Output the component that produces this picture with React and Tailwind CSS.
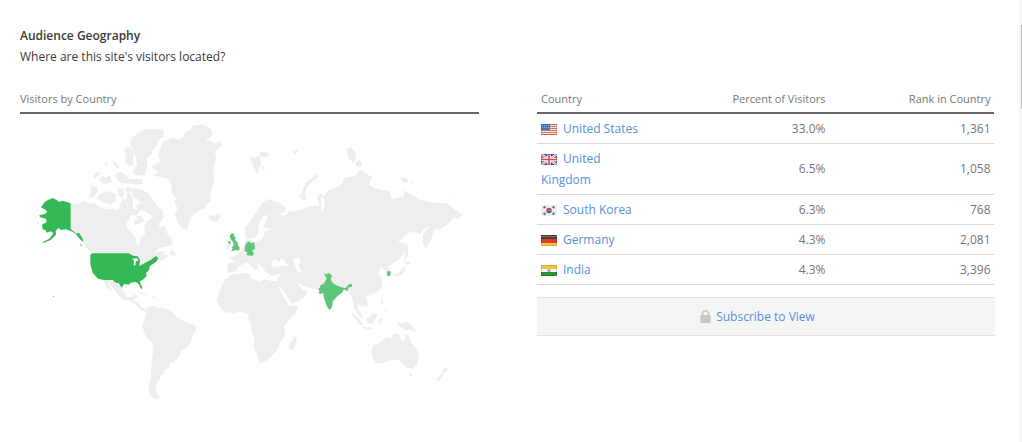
const ROWS = [
  { code: 'us', name: 'United States', percent: '33.0%', rank: '1,361' },
  { code: 'gb', name: 'United Kingdom', percent: '6.5%', rank: '1,058', wrap: true },
  { code: 'kr', name: 'South Korea', percent: '6.3%', rank: '768' },
  { code: 'de', name: 'Germany', percent: '4.3%', rank: '2,081' },
  { code: 'in', name: 'India', percent: '4.3%', rank: '3,396' },
];

const FLAGS = {
  us: (
    <>
      <rect width="16" height="11" fill="#f6e4e2" />
      <path d="M0 .5h16M0 2.5h16M0 4.5h16M0 6.5h16M0 8.5h16M0 10.5h16" stroke="#e0705f" />
      <rect width="9" height="6" fill="#3f74d0" />
      <path d="M1 1.5h7M1 3.5h7" stroke="#8fb2ee" strokeDasharray="1 1" />
    </>
  ),
  gb: (
    <>
      <rect width="16" height="11" fill="#3c4f94" />
      <path d="M0 0l16 11M16 0L0 11" stroke="#f2eef4" strokeWidth="2.6" />
      <path d="M0 0l16 11M16 0L0 11" stroke="#d8677a" strokeWidth=".8" />
      <path d="M8 0v11M0 5.5h16" stroke="#fff" strokeWidth="3.4" />
      <path d="M8 0v11M0 5.5h16" stroke="#d8485a" strokeWidth="1.6" />
    </>
  ),
  kr: (
    <>
      <rect width="16" height="11" fill="#eeeeee" />
      <path d="M5.2 5.5a2.8 2.8 0 0 1 5.6 0z" fill="#e0414c" />
      <path d="M5.2 5.5a2.8 2.8 0 0 0 5.6 0z" fill="#3c62b8" />
      <path d="M2.5 3l2-1.5M11.5 1.5l2 1.5M2.5 8l2 1.5M11.5 9.5l2-1.5" stroke="#666" strokeWidth="1.8" />
    </>
  ),
  de: (
    <>
      <rect width="16" height="11" fill="#4a4038" />
      <rect y="1" width="16" height="1" fill="#7a7068" />
      <rect y="4" width="16" height="4" fill="#e33a26" />
      <rect y="8" width="16" height="3" fill="#f3c546" />
    </>
  ),
  in: (
    <>
      <rect width="16" height="11" fill="#f6f6f2" />
      <rect width="16" height="4" fill="#f5c542" />
      <rect y="7" width="16" height="4" fill="#2f8f3a" />
      <circle cx="8" cy="5.5" r="1.6" fill="#8fa6cc" />
    </>
  ),
};

function Flag({ code }) {
  return (
    <svg className="mr-[6.5px] -ml-[0.5px] inline-block h-[11px] w-4 align-[-2px]" viewBox="0 0 16 11">
      {FLAGS[code]}
      {code !== 'kr' && <rect x=".5" y=".5" width="15" height="10" fill="none" stroke="#000" strokeOpacity=".12" />}
    </svg>
  );
}

function WorldMap() {
  return (
    <svg className="block h-[290px] w-[459px]" viewBox="20 115 459 290" fill="#eeeeee">
      {/* Arctic islands of Canada */}
      <g transform="translate(30 115) scale(.33333)">
        <path d="M300 80L308 65 330 52 350 43 395 42 403 52 400 65 386 75 380 92 368 105 365 118 350 130 352 150 345 180 318 182 308 170 322 150 318 125 310 110Z" />
        <path d="M283 110L290 95 303 98 312 118 308 135 312 150 298 152 285 145 288 125Z" />
        <path d="M185 212L200 216 205 228 192 245 175 250 182 230ZM208 237L232 228 256 236 258 258 240 268 220 262 200 250ZM188 187L205 168 210 176 196 190ZM223 145L232 143 231 160ZM247 135L262 147 270 162 255 155ZM206 195L217 183 228 190 240 178 245 200 222 207ZM255 178L270 170 288 180 302 195 298 206 275 205 262 195ZM262 222L278 220 283 240 270 248ZM285 218L300 215 306 228 290 235Z" />
      </g>
      {/* Greenland, Iceland and Baffin */}
      <g transform="translate(130 115) scale(.33333)">
        <path d="M92 98L100 80 130 68 145 74 160 68 165 50 183 44 187 32 215 28 240 40 248 55 240 68 225 73 245 80 255 86 270 78 275 90 255 110 259 130 250 155 252 200 246 220 240 245 243 258 232 268 225 278 205 288 185 303 178 320 170 345 155 340 142 320 134 298 143 280 133 262 140 252 125 235 124 215 118 195 105 188 70 182 85 170 64 155 92 140 85 120Z" />
        <path d="M240 300L252 303 268 295 272 308 258 322 242 316 236 308ZM0 192L36 192 40 206 8 209 0 205ZM5 220L30 222 55 235 66 250 80 270 98 288 101 304 90 325 70 313 62 300 45 288 25 285 18 272 35 265 22 252 8 245Z" />
        <path d="M18 305L32 302 44 318 30 324ZM-8 225L8 250 10 288-12 262Z" />
      </g>
      {/* North America */}
      <g transform="translate(30 190) scale(.33333)">
        <path d="M123 40L142 42 165 33 180 42 192 40 210 52 235 58 250 56 262 62 270 50 278 25 288 32 290 50 306 44 312 60 330 58 322 75 302 76 290 100 290 114 302 126 316 142 318 160 326 165 331 146 345 132 343 110 352 92 370 84 386 98 390 115 404 106 410 128 425 148 430 164 408 170 388 174 370 190 398 182 402 194 416 196 400 210 388 214 382 203 355 225 320 240 186 192 172 178 160 155 145 132 123 120Z" />
        <path d="M420 178L432 184 438 196 420 196ZM310 92L325 90 330 103 314 104Z" />
        <path fill="#35b856" d="M186 190H296L310 197 323 199 330 210 328 228 340 222 350 216 365 208 378 198 385 205 380 214 369 222 359 229 358 240 348 248 350 258 342 266 329 275 338 294 334 298 326 282 317 276 302 278 296 284 282 282 275 294 266 279 256 280 248 270 225 271 204 266 188 248 181 222 181 196Z" />
        <path fill="#fff" d="M307 206L321 205 325 212 318 213 316 226 311 227 312 213Z" />
        <path fill="#35b856" d="M68 24L54 30 44 36 33 52 47 60 52 66 44 72 28 76 30 82 48 86 50 96 36 104 38 118 46 120 50 128 62 124 70 130 58 146 37 157 40 159 62 150 78 134 77 122 86 114 93 120 108 118 123 123 137 131 150 148 160 156 158 146 148 130 138 130 122 117V40L98 32 88 36 80 30ZM152 160L156 168 152 168ZM23 97l4 1-3 2ZM68 316l4 3-2 3Z" />
      </g>
      {/* Central and South America */}
      <g transform="translate(80 280) scale(.33333)">
        <path d="M70 4L82 24 96 35 84 8 102 26 116 48 132 60 150 62 168 74 182 90 199 96 198 90 182 80 178 70 160 62 175 48 164 44 152 52 140 50 132 36 126 25 115 12 103 5 75 2ZM170 38L190 38 208 46 192 44ZM212 49L228 50 216 54Z" />
        <path d="M200 85L215 77 240 83 262 88 280 98 290 112 315 125 346 136 348 150 336 168 332 190 320 203 302 212 298 228 282 246 268 250 270 262 254 268 250 280 240 288 240 296 230 308 228 325 230 342 242 352 225 357 210 345 205 320 213 290 215 250 220 210 216 185 200 172 187 142 192 120 198 110Z" />
      </g>
      {/* Eurasia */}
      <path d="M245 235L245 228 252 219 259 208 263 202 269 199 277 202 285 207 285 212 279 214 284 216 290 211 294 212 310 206 317 206 320 205 317 199 320 193 324 196 328 190 335 188 342 184 344 178 350 177 355 176 357 174 360 170 366 173 372 177 369 185 374 188 382 190 389 191 392 199 396 198 403 197 405 191 412 195 420 200 436 203 440 203 446 203 454 209 463 215 459 219 453 218 449 223 441 229 434 230 431 240 426 248 423 244 423 234 430 226 424 229 421 233 410 232 403 237 398 242 404 243 405 251 400 258 395 262 388 266 391 274 387 276 385 270 381 267 378 273 382 280 382 287 377 292 370 295 366 297 368 304 365 306 362 307 357 303 358 309 363 317 360 317 354 308 352 298 348 290 344 288 338 295 331 309 326 302 320 290 310 288 301 285 296 281 302 290 308 290 305 297 292 304 287 297 278 286 277 280 280 274 271 276 265 271 269 268 265 271 262 267 256 262 259 269 255 270 246 262 238 267 237 271 228 273 227 266 228 263 237 262 228 258 235 256 242 251 244 244 246 238 251 243Z" />
      {/* Baltic, Black Sea, Caspian and northern inlets */}
      <path fill="#fff" d="M249 239L256 237 259 230 258 225 263 216 268 215 266 222 263 227 271 229 265 232 262 239 256 242 252 242ZM271 262L275 259 279 262 282 258 285 262 288 266 281 266 273 268ZM293 259L298 257 301 262 298 265 302 272 298 273 295 266ZM321 196L324 199 325 207 321 213ZM278 286L281 287 287 296 291 304 289 305 284 298Z" />
      {/* Africa */}
      <g transform="translate(210 255) scale(.33333)">
        <path d="M60 60L80 58 105 54 120 57 120 68 135 75 150 80 160 72 180 77 202 78 205 95 220 125 238 152 265 153 258 172 235 196 222 215 226 240 210 262 206 280 190 298 172 316 150 325 144 305 132 280 134 252 124 225 124 205 114 190 116 178 92 170 70 174 45 172 28 155 21 135 28 108 42 78ZM238 284L238 266 256 244 261 252 250 284ZM366 165L373 168 370 174Z" />
      </g>
      {/* Svalbard, Novaya Zemlya, British Isles and Germany */}
      <g transform="translate(210 135) scale(.33333)">
        <path d="M120 65L135 68 145 62 155 80 148 100 139 116 128 88ZM148 52L165 48 178 58 168 67 150 65ZM155 92L170 100 158 104ZM246 45L268 44 255 58ZM324 117L300 133 286 145 278 165 268 184 280 196 290 192 284 178 292 155 305 142 325 126ZM50 326L60 328 58 344 48 342Z" />
        <path fill="#5fc57b" d="M60 300L66 295 73 297 72 304 77 307 75 315 82 322 85 333 89 337 88 346 76 346 63 349 68 340 64 337 71 332 70 322 64 316 60 308ZM54 318L62 319 61 328 55 325ZM110 323L118 319 122 325 132 322 134 330 135 342 126 347 132 355 128 362 110 361 112 352 104 348 105 334Z" />
      </g>
      {/* Siberian islands and Sakhalin */}
      <g transform="translate(320 135) scale(.33333)">
        <path d="M80 45L92 35 105 50 107 75 100 83 85 70ZM108 80L120 75 127 88 118 97 108 92ZM240 130L262 130 264 142 250 143ZM272 138L285 140 280 146ZM250 160L262 161 252 165ZM388 187L397 187 394 192ZM255 325L263 330 265 360 256 375Z" />
      </g>
      {/* South Asia, Oceania */}
      <g transform="translate(320 250) scale(.33333)">
        <path d="M155 300L160 286 185 276 200 262 214 264 224 250 240 255 238 266 252 276 258 252 265 256 272 275 290 298 298 318 290 345 278 356 258 352 245 338 240 332 226 328 205 332 185 340 165 340 158 322ZM268 372L278 370 272 382ZM375 350L384 357 372 370 366 370ZM364 371L370 376 354 395 348 388ZM228 213L245 220 262 216 278 230 292 245 270 240 258 240 240 230ZM138 206L150 200 160 190 172 192 166 208 158 222 142 218ZM92 186L104 194 120 210 129 224 120 226 106 208ZM124 228L156 234 156 240 132 235ZM174 212L180 205 190 206 182 212 186 222 178 220ZM182 146L190 150 190 164 184 160ZM192 178L202 178 200 188ZM253 32L274 38 260 46ZM256 47L255 62 245 76 222 80 216 76 236 70ZM260 0L264 2 258 28 252 30ZM138 165L145 165 140 170ZM205 238L214 230 212 238Z" />
        <path fill="#5fc57b" d="M12 70L20 73 27 69 36 77 32 88 36 97 47 105 64 112 76 114 88 102 97 103 95 110 86 112 82 124 72 118 66 128 50 140 38 154 36 172 28 180 20 168 12 145 10 128 2 132-5 128-1 123-5 117 1 112-1 108 12 100 20 87ZM201 65L210 62 213 70 210 77 202 79Z" />
      </g>
    </svg>
  );
}

function CountryTable() {
  return (
    <table className="w-[457px] table-fixed border-collapse text-[12px] leading-[21px] text-[#777]">
      <colgroup>
        <col className="w-[124px]" />
        <col className="w-[169px]" />
        <col className="w-[164px]" />
      </colgroup>
      <thead>
        <tr className="h-6 border-b-2 border-[#666] text-[11px] leading-[20px]">
          <th className="px-1 pt-0 pb-[3px] text-left font-normal">Country</th>
          <th className="pt-0 pr-[4.5px] pb-[3px] text-right font-normal">Percent of Visitors</th>
          <th className="pt-0 pr-[3.5px] pb-[3px] text-right font-normal">Rank in Country</th>
        </tr>
      </thead>
      <tbody>
        {ROWS.map((row) => (
          <tr key={row.code} className="border-b border-[#d9d9d9]">
            <td className="py-1 pr-0 pl-1 text-[#5591dc]">
              <div className={row.wrap ? 'w-[90px]' : 'whitespace-nowrap'}>
                <Flag code={row.code} />
                {row.name}
              </div>
            </td>
            <td className={`pt-1 pr-[4.5px] text-right ${row.wrap ? 'pb-[6px]' : 'pb-1'}`}>{row.percent}</td>
            <td className={`pt-1 pr-[3.5px] text-right ${row.wrap ? 'pb-[6px]' : 'pb-1'}`}>{row.rank}</td>
          </tr>
        ))}
      </tbody>
    </table>
  );
}

export default function App() {
  return (
    <div className="flex h-[442px] w-[1022px] justify-between overflow-hidden bg-white font-['Open_Sans',sans-serif] text-[12px] text-[#3a3a3a]">
      <div className="pt-[25px] pl-5">
        <h1 className="text-[12px] leading-[21px] font-semibold">Audience Geography</h1>
        <p className="leading-[21px]">Where are this site's visitors located?</p>
        <div className="mt-[22px] flex items-start gap-[58px]">
          <section className="w-[459px]">
            <h2 className="h-[25px] border-b-2 border-[#666] text-[11px] leading-[20px] text-[#777]">Visitors by Country</h2>
            <div className="pt-[1px]">
              <WorldMap />
            </div>
          </section>
          <section className="w-[458px]">
            <CountryTable />
            <div className="mt-3 flex h-[39px] items-center justify-center gap-[5px] border-y border-[#e2e2e2] bg-[#f5f5f5] pr-[17px] text-[#5591dc]">
              <svg className="h-[13px] w-[11px]" viewBox="0 0 11 13">
                <path d="M2.5 6V3.8a3 3 0 0 1 6 0V6" fill="none" stroke="#c6c6c6" strokeWidth="1.6" />
                <rect x=".5" y="5" width="10" height="8" rx=".8" fill="#c6c6c6" />
              </svg>
              <span>Subscribe to View</span>
            </div>
          </section>
        </div>
      </div>
      {/* Scrollbar edge */}
      <div className="flex w-[3px] justify-end bg-[#f4f4f4] pt-[25px]">
        <div className="h-[84px] w-px bg-[#c1c1c1]" />
      </div>
    </div>
  );
}
